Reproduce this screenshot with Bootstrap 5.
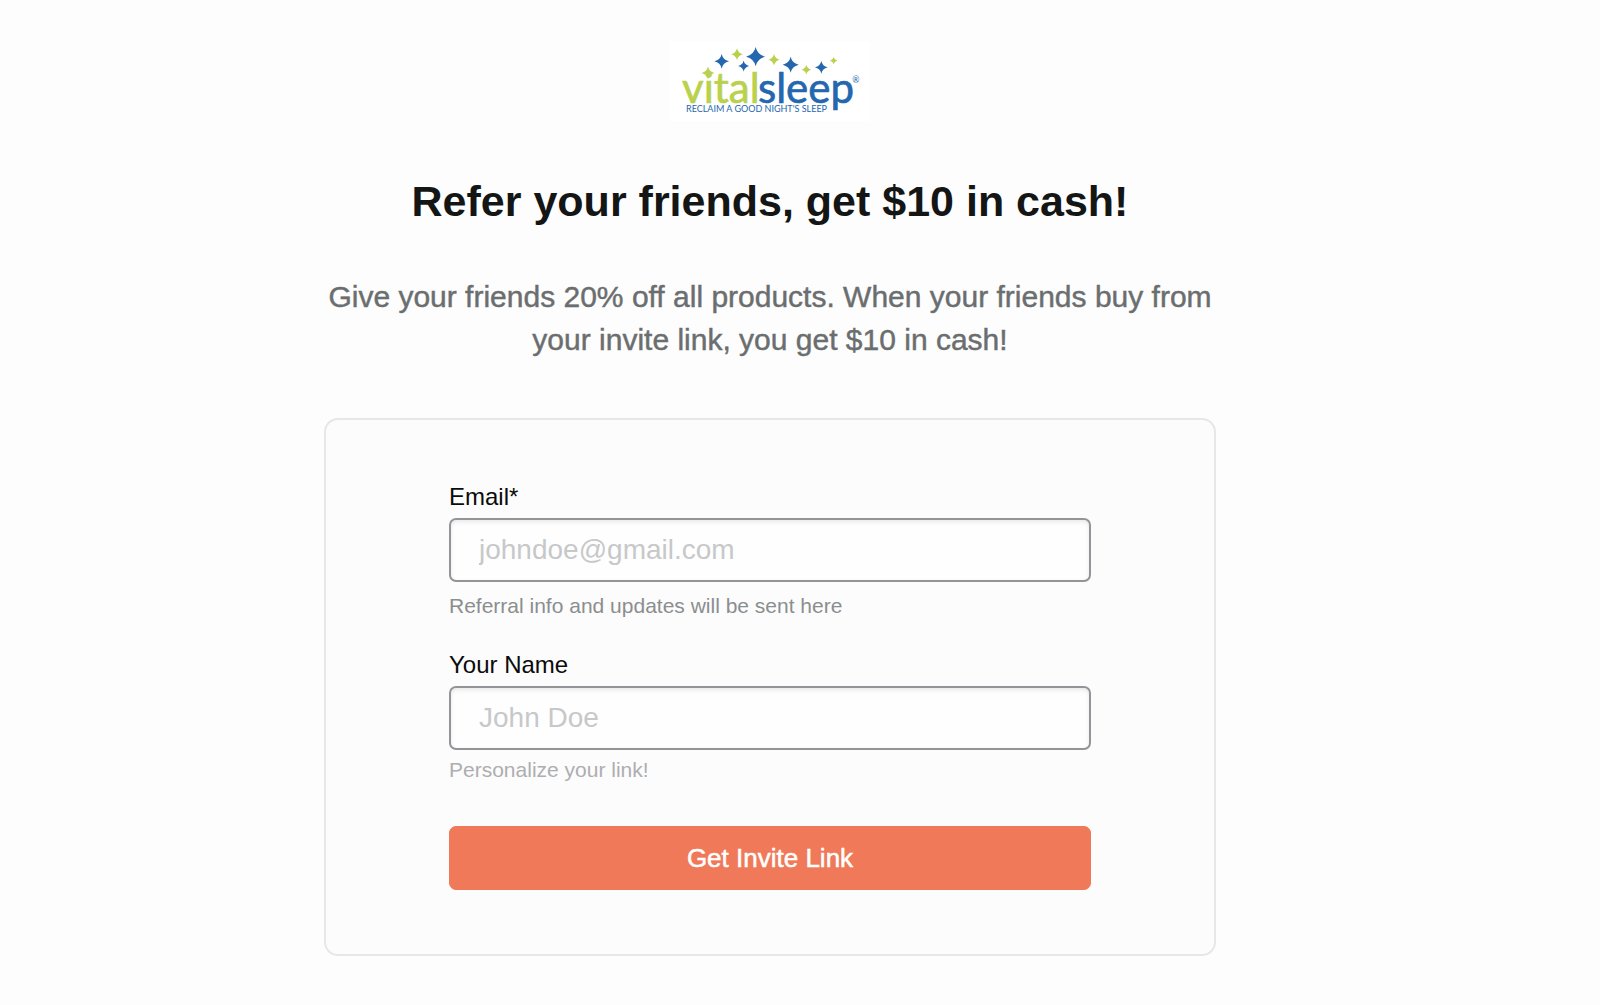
<!DOCTYPE html>
<html lang="en">
<head>
<meta charset="utf-8">
<meta name="viewport" content="width=device-width, initial-scale=1">
<title>VitalSleep – Refer your friends</title>
<link href="https://cdn.jsdelivr.net/npm/bootstrap@5.3.0/dist/css/bootstrap.min.css" rel="stylesheet">
<style>
  body { background: #fdfdfd; font-family: "Liberation Sans", Arial, sans-serif; color: #141615; }
  .referral { max-width: 892px; }
  .page-shell { padding: 41px 60px 48px 0; }
  .brand-logo { width: 200px; height: 80px; }
  .referral-title { font-size: 43px; line-height: 52px; margin: 54px 0 0; }
  .referral-text { font-size: 30px; line-height: 43px; color: #6b6e6f; margin: 48px 0 57px; -webkit-text-stroke: .015em currentColor; }
  .form-panel { background: #fcfcfc; border: 2px solid #e6e7e8; border-radius: 14px; padding: 61px 123px 64px; }
  .form-panel .form-label { font-size: 24px; line-height: 32px; color: #0b0b0b; margin: 0 0 5px; }
  .form-panel .form-control { height: 64px; border: 2px solid #929497; border-radius: 7px; padding: 0 28px; font-size: 28px; background: #fefefe; box-shadow: inset 0 2px 4px rgba(0,0,0,.09); }
  .form-panel .form-control::placeholder { color: #c7c8c9; opacity: 1; }
  .form-panel .form-text { font-size: 21px; line-height: 28px; margin: 10px 0 0; color: #8b8e8f; }
  .form-panel .email-group { margin-bottom: 29px; }
  .form-panel .name-hint { color: #adaeb0; margin-top: 6px; }
  .btn-invite { --bs-btn-color: #fff; --bs-btn-bg: #ef7958; --bs-btn-border-color: #ef7958; --bs-btn-hover-color: #fff; --bs-btn-hover-bg: #e56c4a; --bs-btn-hover-border-color: #e56c4a; height: 64px; font-size: 26px; border-radius: 7px; margin-top: 42px; -webkit-text-stroke: .02em currentColor; }
</style>
<script defer src="https://cdn.jsdelivr.net/npm/bootstrap@5.3.0/dist/js/bootstrap.bundle.min.js"></script>
</head>
<body>
<div class="page-shell">
  <main class="referral mx-auto text-center">
    <svg class="brand-logo d-block mx-auto" viewBox="0 0 600 240" role="img" aria-label="VitalSleep">
      <defs><path id="spark" d="M0-24Q4-5 24 0Q4 5 0 24Q-4 5-24 0Q-4-5 0-24Z"/></defs>
      <rect width="600" height="240" fill="#fff"/>
      <g fill="#b9d14c">
        <use href="#spark" transform="translate(114 96) scale(.8)"/>
        <use href="#spark" transform="translate(201 40) scale(.75)"/>
        <use href="#spark" transform="translate(312 56) scale(.72)"/>
        <use href="#spark" transform="translate(409 86) scale(.6)"/>
        <use href="#spark" transform="translate(491 59) scale(.45)"/>
      </g>
      <g fill="#2467ae">
        <use href="#spark" transform="translate(155 61) scale(.92)"/>
        <use href="#spark" transform="translate(221 75) scale(.7)"/>
        <use href="#spark" transform="translate(257 47) scale(1.2)"/>
        <use href="#spark" transform="translate(362 71) scale(1)"/>
        <use href="#spark" transform="translate(454 79) scale(.8)"/>
      </g>
      <g font-family="Lato, sans-serif">
        <text x="36" y="187" font-size="126" fill="#b9d14c" stroke="#b9d14c" stroke-width="2">vital</text>
        <text x="264" y="187" font-size="126" fill="#2467ae" stroke="#2467ae" stroke-width="2">sleep</text>
        <text x="48" y="214" font-size="27" fill="#2467ae">RECLAIM A GOOD NIGHT'S SLEEP</text>
        <text x="547" y="126" font-size="26" fill="#2467ae">®</text>
      </g>
    </svg>
    <h1 class="referral-title fw-bold">Refer your friends, get $10 in cash!</h1>
    <p class="referral-text">Give your friends 20% off all products. When your friends buy from your invite link, you get $10 in cash!</p>
    <form class="form-panel text-start">
      <div class="email-group">
        <label class="form-label d-block" for="email">Email*</label>
        <input class="form-control" type="email" id="email" placeholder="johndoe@gmail.com" aria-describedby="emailHelp" required>
        <p class="form-text" id="emailHelp">Referral info and updates will be sent here</p>
      </div>
      <div>
        <label class="form-label d-block" for="name">Your Name</label>
        <input class="form-control" type="text" id="name" placeholder="John Doe" aria-describedby="nameHelp">
        <p class="form-text name-hint" id="nameHelp">Personalize your link!</p>
      </div>
      <button class="btn btn-invite w-100" type="submit">Get Invite Link</button>
    </form>
  </main>
</div>
</body>
</html>
